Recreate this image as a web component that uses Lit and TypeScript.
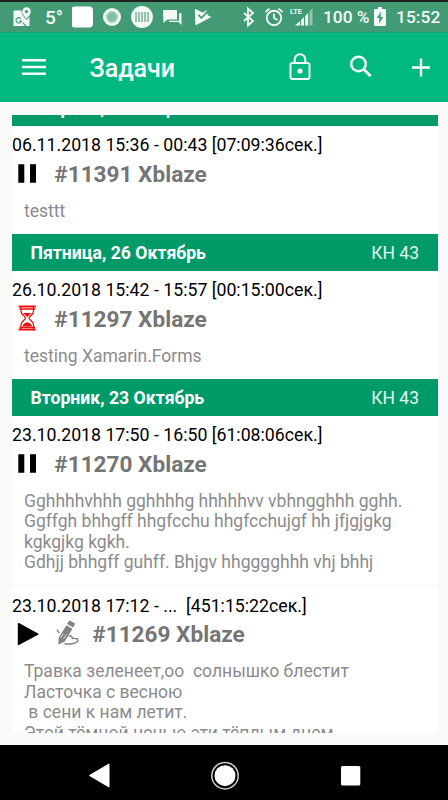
import { LitElement, html, svg, css, nothing } from "lit";
import { customElement, property } from "lit/decorators.js";

type Status = "pause" | "wait" | "play";

interface Task {
  time: string;
  status: Status;
  signed?: boolean;
  title: string;
  text: string;
}

interface Day {
  name: string;
  week: string;
  tasks: Task[];
}

const days: Day[] = [
  {
    name: "Вторник, 6 Ноябрь",
    week: "КН 45",
    tasks: [
      { time: "06.11.2018 15:36 - 00:43 [07:09:36сек.]", status: "pause", title: "#11391 Xblaze", text: "testtt" },
    ],
  },
  {
    name: "Пятница, 26 Октябрь",
    week: "КН 43",
    tasks: [
      { time: "26.10.2018 15:42 - 15:57 [00:15:00сек.]", status: "wait", title: "#11297 Xblaze", text: "testing Xamarin.Forms" },
    ],
  },
  {
    name: "Вторник, 23 Октябрь",
    week: "КН 43",
    tasks: [
      {
        time: "23.10.2018 17:50 - 16:50 [61:08:06сек.]",
        status: "pause",
        title: "#11270 Xblaze",
        text: "Gghhhhvhhh gghhhhg hhhhhvv vbhngghhh gghh.\nGgffgh bhhgff hhgfcchu hhgfcchujgf hh jfjgjgkg\nkgkgjkg kgkh.\nGdhjj bhhgff guhff. Bhjgv hhgggghhh vhj bhhj",
      },
      {
        time: "23.10.2018 17:12 - ...  [451:15:22сек.]",
        status: "play",
        signed: true,
        title: "#11269 Xblaze",
        text: "Травка зеленеет,оо  солнышко блестит\nЛасточка с весною\n в сени к нам летит.\nЭтой тёмной ночью эти тёплым днем",
      },
    ],
  },
];

const statusIcons = {
  pause: html`<svg width="32" height="24" viewBox="0 0 32 24"><path d="M6.300 2.200h6v18.600h-6zM18 2.200h6v18.600h-6z" /></svg>`,
  play: html`<svg width="32" height="24" viewBox="0 0 32 24"><path d="M6.600 .8 25.700 11.100 6.600 21.400z" stroke="#000" stroke-width="1.600" stroke-linejoin="round" /></svg>`,
  wait: html`<svg class="wait" width="32" height="26" viewBox="0 0 32 26">
    <g fill="none" stroke="#f00d0d" stroke-width="1.300">
      <path d="M6.600 1.400h17.200M6.600 24.600h17.200" stroke-width="2" />
      <path d="M9 2v4.500c0 3 4.500 4.500 4.500 6.500S9 16.500 9 19.500V24M21.500 2v4.500c0 3-4.500 4.500-4.500 6.500s4.500 3.500 4.500 6.500V24M7.500 4h15.500M7.500 22.300h15.500" />
    </g>
    <path d="M11.200 8h8c-.8 1.500-3.200 2.500-4 4.200-.8-1.700-3.200-2.700-4-4.200zM10.500 21.500c0-2.300 2.600-3.900 4.700-4.300 2.200.4 4.800 2 4.800 4.300z" fill="#f00d0d" />
  </svg>`,
};

const pen = html`<svg class="pen" width="24" height="26" viewBox="0 0 24 26">
  <g fill="#85807f">
    <path d="M13.800.6 18.600 3.300Q19.300 3.800 18.900 4.500L17.200 7.500 11.100 4 12.900 1Q13.200.4 13.800.6z" />
    <path d="M10.400 5.200 16.500 8.700 8.800 21.400 2.400 24.500 2.700 17.800z" />
  </g>
  <path d="M7.300 13.400 4.600 18M10.500 14 7.500 19" stroke="#fff" stroke-width=".7" />
  <path d="M.8 9.600c1.200 1.300 1.200 2.600 2.700 3.200M12.800 16.300c2.500-1.300 4 .4 3 2.200M15.800 18.500c4.500-.5 6.800.4 6 2.200-1.200 2.500-7.300 4-13.300 3" fill="none" stroke="#85807f" stroke-width="1.400" />
</svg>`;

@customElement("status-bar")
class StatusBar extends LitElement {
  static styles = css`
    :host { display: flex; flex: none; box-sizing: border-box; height: 33px; padding: 0 7px 0 11px; border-top: 2px solid #222; border-bottom: 1px solid #12a878; background: #429b74; color: #f5faf7; align-items: center; font-size: 17.300px; font-weight: 500; white-space: nowrap; }
    svg { display: block; flex: none; }
    .temp { width: 27px; margin-left: 13px; font-size: 19px; }
    .pct { width: 51px; margin-left: 8px; }
    .clock { margin-left: 10px; letter-spacing: .1px; }
  `;
  render() {
    return html`
      <svg width="21" height="22" viewBox="0 0 21 22"><path d="M2.500 4.500h8c0 4.500 2.700 7 5 9.500l3-3v9h-16z" fill="#f4faf7" /><path d="M15.500 1.300a4.300 4.300 0 0 0-4.300 4.300c0 3 4.300 7.400 4.300 7.400s4.300-4.400 4.300-7.400a4.300 4.300 0 0 0-4.300-4.300z" fill="#f4faf7" /><circle cx="15.500" cy="5.600" r="1.600" fill="#429b74" /><path d="M9.800 12.600a2.700 2.700 0 1 0 .6 2.400H8.100M12 17l3 3" fill="none" stroke="#429b74" stroke-width="1.200" /></svg>
      <span class="temp">5°</span>
      <svg width="140" height="24" viewBox="0 0 140 24">
        <rect x="-1" y="1.500" width="22" height="21" rx="4" fill="#fff" />
        <circle cx="40" cy="12" r="9" fill="#f0f8f4" /><circle cx="40" cy="12" r="5.500" fill="#82bda4" stroke="#b7d9ca" stroke-width="1.500" />
        <circle cx="70" cy="12" r="10.900" fill="#f5faf7" /><path d="M64 7v10M67 7v10M70 7v10M73 7v10M76 7v10" stroke="#68ad90" stroke-width="1.400" />
        <path d="M91 5h14v9.500H95.500L91.500 18z" fill="#f4faf7" /><path d="M107 8.300h2.500V20l-3-3H97v-1.300h10z" fill="#f4faf7" />
        <path d="M123.500 4.700 131 8.500 134 6 135 10.500 138.200 12 124 19.300z" fill="#f4faf7" stroke="#f4faf7" stroke-width="1.300" stroke-linejoin="round" /><path d="m126.500 9.800 3 3.200 6-6.500" fill="none" stroke="#429b74" stroke-width="1.800" />
      </svg>
      <svg width="103" height="24" viewBox="0 0 103 24">
        <path d="m32 8 9 8-5 4.500V3.500L41 8l-9 8" fill="none" stroke="#f4faf7" stroke-width="1.800" />
        <circle cx="62" cy="13" r="7.200" fill="none" stroke="#f4faf7" stroke-width="1.900" /><path d="M62 8.500V13l3.500 2M53.500 7l4-3.400M70.500 7l-4-3.400" fill="none" stroke="#f4faf7" stroke-width="1.700" />
        <text x="78" y="8.500" font-size="8" font-weight="700" textLength="12" lengthAdjust="spacingAndGlyphs" fill="#f4faf7">LTE</text>
        <path d="M83 20.500 88 16v4.500zM89 15l3-3v8.500h-3zM93.200 10.900l3-3v12.600h-3z" fill="#f4faf7" /><path d="m97.500 6.600 3-3v16.900h-3z" fill="#93c4ae" />
      </svg>
      <span class="pct">100 %</span>
      <svg width="12" height="20" viewBox="0 0 12 20"><path d="M4 0h4v2h3q1 0 1 1v15q0 1-1 1H1q-1 0-1-1V3q0-1 1-1h3z" fill="#f4faf7" /><path d="M7 4.500 2.800 11h2.600L5 16.500 9.300 10H6.600z" fill="#429b74" /></svg>
      <span class="clock">15:52</span>`;
  }
}

@customElement("tool-bar")
class ToolBar extends LitElement {
  static styles = css`
    :host { display: flex; flex: none; box-sizing: border-box; height: 69px; padding: 0 18.500px 2px 22px; background: #00b880; color: #fff; align-items: center; }
    h1 { margin: 4px 0 0; padding-left: 43.500px; flex: 1; font-size: 25px; line-height: 30px; font-weight: 500; }
    .menu, .lock, .search, .plus { display: block; fill: none; stroke: #f3fcf8; stroke-width: 2.400; }
    .lock { stroke-width: 2; }
    .search { margin-left: 37.500px; }
    .plus { margin-left: 39px; }
  `;
  render() {
    return html`
      <svg class="menu" width="24" height="18" viewBox="0 0 24 18"><path d="M0 2.200h24M0 9h24M0 15.800h24" /></svg>
      <h1>Задачи</h1>
      <svg class="lock" width="22" height="28" viewBox="0 0 22 28"><rect x="1.500" y="10" width="19" height="15.900" rx="1.800" /><path d="M5.700 10V6.500a5.300 5.300 0 0 1 10.600 0V10" /><circle cx="11" cy="18" r="1.600" fill="#f3fcf8" /></svg>
      <svg class="search" width="24" height="24" viewBox="0 0 24 24"><circle cx="9.500" cy="9" r="7.300" /><path d="m14.700 14.300 7 7" stroke-width="2.800" /></svg>
      <svg class="plus" width="18" height="20" viewBox="0 0 18 20"><path d="M9 1.500v18M0 10.500h18" stroke-width="2.400" /></svg>`;
  }
}

@customElement("task-item")
class TaskItem extends LitElement {
  @property({ attribute: false }) task!: Task;
  static styles = css`
    :host { display: block; padding: 9.400px 0 12.700px; background: #fff; white-space: pre; }
    .time { font-size: 17.730px; line-height: 20.500px; color: #000; }
    .head { display: flex; align-items: center; height: 37px; }
    .wait { margin-top: -2px; }
    .pen { display: block; margin: 0 2px 3px 12px; }
    .title { margin: .8px 0 0 10.300px; font-size: 22.600px; line-height: 26px; font-weight: 700; color: #757575; }
    .text { margin: 8px 0 0 12px; font-size: 17.530px; line-height: 20.500px; color: #8b8b8b; }
  `;
  render() {
    const t = this.task;
    return html`<div class="time">${t.time}</div><div class="head">${statusIcons[t.status]}${t.signed ? pen : nothing}<span class="title">${t.title}</span></div><div class="text">${t.text}</div>`;
  }
}

@customElement("app-root")
class AppRoot extends LitElement {
  static styles = css`
    :host { display: flex; flex-direction: column; height: 800px; overflow: hidden; background: #fafafa; font-family: Roboto, "Noto Sans", sans-serif; }
    .list { flex: 1; min-height: 0; margin: 12.500px 10px 12px 12px; overflow: hidden; display: flex; flex-direction: column; justify-content: flex-start; background: #fff; }
    .scroll { margin-top: -25.700px; }
    .day { display: flex; align-items: center; justify-content: space-between; box-sizing: border-box; height: 37px; padding: 2px 19px 0 18.500px; background: #009a69; color: #fff; font-size: 17.500px; }
    .name { font-size: 17.650px; font-weight: 700; }
    .week { color: #e6f5f0; }
    task-item + task-item { border-top: 2px solid #fafafa; margin-top: -1.200px; }
    .nav { flex: none; display: flex; height: 55px; background: #000; }
    .nav svg { display: block; width: 448px; height: 55px; }
  `;
  render() {
    return html`
      <status-bar></status-bar>
      <tool-bar></tool-bar>
      <main class="list"><div class="scroll">
        ${days.map((d) => html`
          <div class="day"><span class="name">${d.name}</span><span class="week">${d.week}</span></div>
          ${d.tasks.map((t) => html`<task-item .task=${t}></task-item>`)}`)}
      </div></main>
      <nav class="nav"><svg viewBox="0 0 448 55">
        ${svg`<path d="M89.500 30.500 109 19v23z" fill="#fff" stroke="#fff" stroke-linejoin="round" />
        <circle cx="225" cy="30.700" r="13.200" fill="none" stroke="#ccc" stroke-width="1.500" /><circle cx="225" cy="30.700" r="10.500" fill="#fff" />
        <rect x="341" y="21" width="19.300" height="19.500" rx="1.500" fill="#fff" />`}
      </svg></nav>`;
  }
}
